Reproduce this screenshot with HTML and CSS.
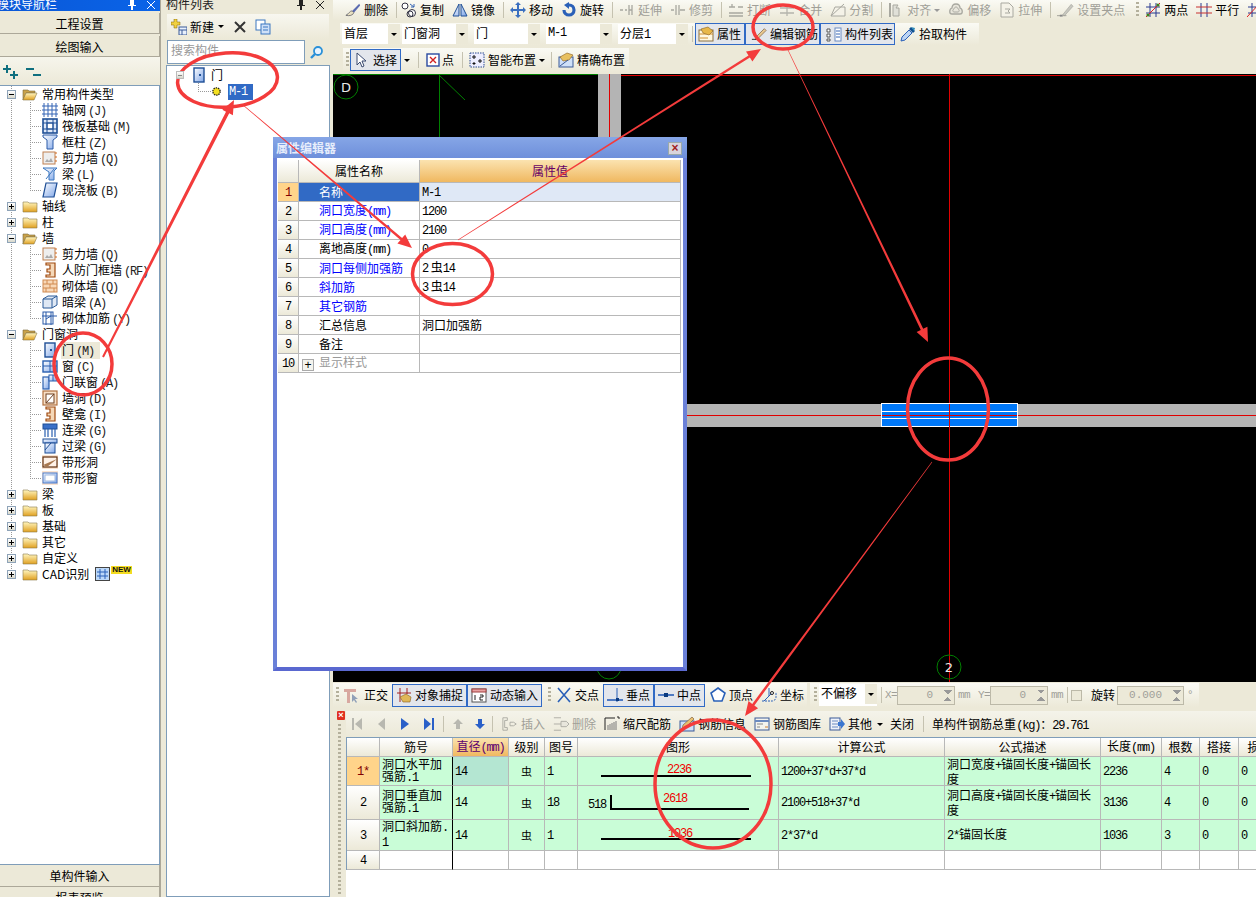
FILE: index.html
```html
<!DOCTYPE html>
<html lang="zh">
<head>
<meta charset="utf-8">
<title>构件编辑</title>
<link rel="stylesheet" href="styles.css">
</head>
<body>
<svg class="sprite" width="0" height="0">
  <defs>
    <linearGradient id="gold" x1="0" y1="0" x2="0" y2="1"><stop offset="0" stop-color="#fff6c0"/><stop offset="1" stop-color="#e0a020"/></linearGradient>
    <linearGradient id="blu" x1="0" y1="0" x2="1" y2="1"><stop offset="0" stop-color="#ffffff"/><stop offset="1" stop-color="#7fa6e8"/></linearGradient>
    <symbol id="f-open" viewBox="0 0 16 16"><path d="M1 14V4h5l1 1h6v2H4L1 14z" fill="#c9a24a" stroke="#7a6a3a" stroke-width=".6"/><path d="M1 14l3-7h11l-3 7z" fill="url(#gold)" stroke="#8a7a4a" stroke-width=".6"/></symbol>
    <symbol id="f-shut" viewBox="0 0 16 16"><path d="M1 4h5l1 1h8v9H1z" fill="url(#gold)" stroke="#8a7a4a" stroke-width=".6"/></symbol>
    <symbol id="grid" viewBox="0 0 16 16"><path d="M2 1v14M6 1v14M10 1v14M14 1v14M0 4h16M0 8h16M0 12h16" stroke="#3565b5" fill="none"/></symbol>
    <symbol id="raft" viewBox="0 0 16 16"><rect x="1" y="1" width="14" height="14" fill="#dfe8f8" stroke="#1f4f96" stroke-width="1.6"/><rect x="5" y="5" width="6" height="6" fill="#fff" stroke="#1f4f96"/><path d="M1 5h14M1 11h14M5 1v14M11 1v14" stroke="#1f4f96"/></symbol>
    <symbol id="col" viewBox="0 0 16 16"><path d="M1 1h14v2l-4 3v9H5V6L1 3z" fill="url(#blu)" stroke="#2a5aa8"/></symbol>
    <symbol id="wall" viewBox="0 0 16 16"><rect x="1" y="2" width="12" height="12" fill="#eee" stroke="#c08050"/><path d="M3 12l2-3 2 2 2-3 2 4z" fill="#aaa"/><path d="M13 3h2M13 7h2M13 11h2" stroke="#d06a20"/></symbol>
    <symbol id="beam" viewBox="0 0 16 16"><path d="M1 2h14l-3 3v9H7V6z" fill="url(#blu)" stroke="#3a76c0"/><path d="M4 13l8-10" stroke="#3a76c0"/></symbol>
    <symbol id="slab" viewBox="0 0 16 16"><path d="M4 1h11l-3 14H1z" fill="url(#blu)" stroke="#1f4f96" stroke-width="1.2"/></symbol>
    <symbol id="rf" viewBox="0 0 16 16"><path d="M4 1h9v14H4v-2h4v-3H5V7h3V3H4z" fill="#f5d8b8" stroke="#a04a10" stroke-width="1.2"/></symbol>
    <symbol id="brick" viewBox="0 0 16 16"><rect x="1" y="2" width="14" height="12" fill="#f8d8b8" stroke="#d08a50"/><path d="M1 6h14M1 10h14M5 2v4M11 2v4M8 6v4M4 10v4M12 10v4" stroke="#d08a50"/></symbol>
    <symbol id="dark" viewBox="0 0 16 16"><path d="M1 5l5-3h9v9l-5 3H1z" fill="#dfe8f4" stroke="#2a5a98"/><path d="M1 5h9v9M10 5l5-3" stroke="#2a5a98" fill="none"/></symbol>
    <symbol id="rebar" viewBox="0 0 16 16"><rect x="1" y="2" width="10" height="12" fill="#fff" stroke="#2a5aa8"/><path d="M0 6h15M4 2v13M9 2v13M4 9l5-3" stroke="#2a5aa8" fill="none"/></symbol>
    <symbol id="door" viewBox="0 0 16 16"><rect x="3" y="1" width="10" height="14" fill="url(#blu)" stroke="#1f4f96" stroke-width="1.4"/><rect x="8" y="7" width="2" height="2" fill="#1f4f96"/></symbol>
    <symbol id="win" viewBox="0 0 16 16"><rect x="1" y="3" width="14" height="11" fill="url(#blu)" stroke="#2a5fb0" stroke-width="1.4"/><path d="M8 3v11M1 8h14" stroke="#2a5fb0"/></symbol>
    <symbol id="dw" viewBox="0 0 16 16"><rect x="1" y="3" width="6" height="12" fill="url(#blu)" stroke="#2a5fb0" stroke-width="1.2"/><rect x="7" y="1" width="8" height="6" fill="url(#blu)" stroke="#2a5fb0"/><path d="M11 1v6" stroke="#2a5fb0"/></symbol>
    <symbol id="hole" viewBox="0 0 16 16"><rect x="1" y="1" width="14" height="14" fill="#f8e0c8" stroke="#b07040" stroke-width="1.2"/><rect x="4" y="4" width="8" height="9" fill="#fff" stroke="#704020"/><path d="M4 13l8-9" stroke="#704020"/></symbol>
    <symbol id="lint" viewBox="0 0 16 16"><rect x="1" y="2" width="14" height="5" fill="#3a70c8" stroke="#1f4f96"/><path d="M3 7v8M6 7v8M10 7v8M13 7v8" stroke="#2a5fb0" stroke-width="1.2"/></symbol>
    <symbol id="over" viewBox="0 0 16 16"><rect x="1" y="1" width="14" height="4" fill="url(#blu)" stroke="#1f4f96"/><rect x="3" y="5" width="10" height="10" fill="url(#blu)" stroke="#1f4f96"/><path d="M3 12l6-7" stroke="#1f4f96"/></symbol>
    <symbol id="strip" viewBox="0 0 16 16"><rect x="0" y="1" width="16" height="14" fill="#fbe3d0"/><rect x="1" y="3" width="14" height="10" fill="#fff2e8" stroke="#603010" stroke-width="1.2"/><path d="M1 11l14-6-10 8z" fill="#a87850"/></symbol>
    <symbol id="stripw" viewBox="0 0 16 16"><rect x="0" y="1" width="16" height="14" fill="#fbe3d0"/><rect x="1" y="3" width="14" height="10" fill="url(#blu)" stroke="#4a7ac8"/><rect x="3" y="5" width="10" height="6" fill="#fff" stroke="#a0b8e0"/></symbol>
    <symbol id="brush" viewBox="0 0 18 16"><path d="M16 1L8 9l2 2 7-8z" fill="#5a6ab0"/><path d="M8 9c-3 0-3 3-7 5 4 1 8 0 9-3z" fill="#e8e0c0" stroke="#404050" stroke-width=".7"/></symbol>
    <symbol id="copy" viewBox="0 0 16 16"><circle cx="4" cy="4" r="3" fill="#fff" stroke="#334"/><circle cx="11" cy="11" r="3.5" fill="#fff" stroke="#334"/><circle cx="9" cy="12" r="3" fill="none" stroke="#334"/><path d="M9 2l4 3m0-3v3h-3" stroke="#3565b5" fill="none"/></symbol>
    <symbol id="mirror" viewBox="0 0 16 16"><path d="M7 2L1 14h6zM9 2l6 12H9z" fill="url(#blu)" stroke="#1f4f96"/></symbol>
    <symbol id="move" viewBox="0 0 16 16"><path d="M8 0l3 3H9v4h4V5l3 3-3 3V9H9v4h2l-3 3-3-3h2V9H3v2L0 8l3-3v2h4V3H5z" fill="#3a6fc0"/></symbol>
    <symbol id="rot" viewBox="0 0 16 16"><path d="M8 3a5 5 0 1 1-5 5" fill="none" stroke="#2a60b8" stroke-width="3.2"/><path d="M8 0v7L3 3z" fill="#2a60b8"/></symbol>
    <symbol id="ext" viewBox="0 0 16 16"><path d="M1 8h3M6 8h2M10 8h3M10 3v10M13 3v10" stroke="#a8a8a0" fill="none" stroke-width="1.3"/></symbol>
    <symbol id="trim" viewBox="0 0 16 16"><path d="M1 8h3M10 8h5M6 3v10M9 3v10" stroke="#a8a8a0" fill="none" stroke-width="1.3"/></symbol>
    <symbol id="brk" viewBox="0 0 16 16"><path d="M1 5h6M10 5h5M1 11h14M4 2v3M1 14h14" stroke="#a8a8a0" fill="none" stroke-width="1.3"/></symbol>
    <symbol id="merge" viewBox="0 0 16 16"><path d="M1 6h14M1 11h14M8 2v12" stroke="#b4b4ac" fill="none" stroke-width="1.3"/></symbol>
    <symbol id="split" viewBox="0 0 16 16"><path d="M1 14l4-9h10v9zM1 14l13-12" fill="#f4f2e8" stroke="#a8a8a0"/></symbol>
    <symbol id="align" viewBox="0 0 16 16"><path d="M2 1v14" stroke="#a8a8a0" stroke-width="2"/><path d="M5 3h5l-2 3h3v8H5z" fill="#e0e0d8" stroke="#a8a8a0"/></symbol>
    <symbol id="offs" viewBox="0 0 16 16"><path d="M8 2c-3 0-4 2-4 4-3 1-3 6 0 6h8c3 0 3-5 0-6 0-2-1-4-4-4z" fill="#e8e6dc" stroke="#a8a8a0" stroke-width="1.3"/><path d="M8 5c-1 0-2 1-2 2-2 1-1 3 0 3h4c1 0 2-2 0-3 0-1-1-2-2-2z" fill="none" stroke="#a8a8a0"/></symbol>
    <symbol id="stre" viewBox="0 0 16 16"><path d="M2 1h8l4 4v10H2z" fill="#f4f2e8" stroke="#a8a8a0"/><path d="M6 7h5l-2 2 2 2H6" fill="none" stroke="#a8a8a0"/></symbol>
    <symbol id="grp" viewBox="0 0 18 16"><path d="M6 13L15 2l2 2-9 10z" fill="#c8c8c0" stroke="#a0a098" stroke-width=".6"/><path d="M0 14h4M6 14h4" stroke="#a0a098"/><rect x="3" y="13" width="3" height="2" fill="#888"/></symbol>
    <symbol id="twopt" viewBox="0 0 16 16"><path d="M1 5h14M1 11h14M5 1v14M11 1v14" stroke="#2a3a90" fill="none"/><path d="M1 15L15 1" stroke="#e02020"/><circle cx="3" cy="13" r="1.6" fill="#408020"/><circle cx="13" cy="3" r="1.6" fill="#408020"/></symbol>
    <symbol id="para" viewBox="0 0 16 16"><path d="M5 1v14M11 1v14" stroke="#2a3a90" fill="none"/><path d="M0 5h16M0 11h16" stroke="#c83030"/></symbol>
    <symbol id="ang" viewBox="0 0 16 16"><path d="M1 5h12M1 11h12M5 1v14M10 1v14" stroke="#2a3a90" fill="none"/><path d="M0 15L13 1" stroke="#e02020"/><circle cx="14.500" cy="12" r="1.500" fill="none" stroke="#e02020"/></symbol>
    <symbol id="prop" viewBox="0 0 16 16"><rect x="1" y="4" width="14" height="11" fill="#fff8e0" stroke="#8a7040"/><path d="M1 8h14M2 12h8" stroke="#d09030"/><path d="M3 3l7-2 5 4-4 4-6-2z" fill="#e8b848" stroke="#8a6020" stroke-width=".6"/></symbol>
    <symbol id="edit" viewBox="0 0 18 16"><path d="M6 11l9-9 2 2-9 9-3 1z" fill="#e8c890" stroke="#705030" stroke-width=".7"/><path d="M1 14h8" stroke="#222"/></symbol>
    <symbol id="lst" viewBox="0 0 16 16"><rect x="9" y="2" width="6" height="13" fill="#fff" stroke="#6a8ac0"/><path d="M10 5h4M10 8h4M10 11h4" stroke="#3565b5"/><path d="M1 3h3v3H1zM1 8h3v3H1zM1 13h3v2H1z" fill="#fff" stroke="#555"/></symbol>
    <symbol id="pick" viewBox="0 0 16 16"><path d="M1 15l1-4 7-7 3 3-7 7z" fill="#bcd4f4" stroke="#2a60b8"/><path d="M9 3l2-2 4 4-2 2z" fill="#0f4f90"/><path d="M11 1l4 1-1 3z" fill="#2e8ab8"/></symbol>
    <symbol id="sel" viewBox="0 0 16 16"><path d="M3 1v12l3-3 2 5 2-1-2-5h4z" fill="#fff" stroke="#3a4a70"/></symbol>
    <symbol id="pnt" viewBox="0 0 16 16"><rect x="2" y="2" width="12" height="12" fill="#fff" stroke="#2a4aa0" stroke-width="1.4"/><path d="M5 5l6 6M11 5l-6 6" stroke="#d02020" stroke-width="1.4"/></symbol>
    <symbol id="smart" viewBox="0 0 16 16"><rect x="1" y="1" width="14" height="14" fill="#eef" stroke="#2a4a90" stroke-dasharray="1.500 1"/><path d="M5 3v4M3 5h4M11 7v4M9 9h4M5 10v3M3.500 11.500h3" stroke="#111"/></symbol>
    <symbol id="exact" viewBox="0 0 16 16"><rect x="1" y="5" width="14" height="10" fill="#cfe0f8" stroke="#3a5a98"/><path d="M2 5l7-4 6 2-4 5-6 1z" fill="#e8c060" stroke="#8a6020" stroke-width=".6"/><path d="M2 14l8-6" stroke="#3a5a98"/></symbol>
    <symbol id="orth" viewBox="0 0 16 16"><path d="M0 2h12v3H6v11H3V5H0z" fill="#d8a8a0"/><path d="M8 7v8l2-2 2 3 1-1-2-3h3z" fill="#90a0b8"/></symbol>
    <symbol id="snap" viewBox="0 0 16 16"><path d="M1 6h14M4 1v14M11 1v6" stroke="#a02020"/><path d="M4 10l6-3 5 3-1 5H7z" fill="#e0b858" stroke="#8a6020" stroke-width=".6"/></symbol>
    <symbol id="dyn" viewBox="0 0 16 16"><rect x="1" y="2" width="14" height="13" fill="#fff" stroke="#555"/><rect x="1" y="2" width="14" height="3" fill="#e8a0a0" stroke="#a04040"/><path d="M4 8v5M9 8h3v2h-3v3h3" stroke="#222" fill="none"/></symbol>
    <symbol id="cross" viewBox="0 0 16 16"><path d="M2 1l12 14M14 1L2 15" stroke="#2a60b8" stroke-width="1.6"/></symbol>
    <symbol id="perp" viewBox="0 0 16 16"><path d="M0 13h16" stroke="#2a60b8" stroke-width="1.600"/><path d="M10 1v14" stroke="#2a60b8"/><rect x="9" y="11" width="3" height="3" fill="#0a3a80"/></symbol>
    <symbol id="mid" viewBox="0 0 16 16"><path d="M0 8h16" stroke="#2a60b8" stroke-width="1.600"/><rect x="6" y="6" width="4" height="4" fill="#0a3a80"/></symbol>
    <symbol id="vert" viewBox="0 0 16 16"><path d="M8 1l7 5-3 8H4L1 6z" fill="#fff" stroke="#2a60b8" stroke-width="1.600"/></symbol>
    <symbol id="coord" viewBox="0 0 16 16"><path d="M1 14h10a4 4 0 0 0 4-4V5" fill="none" stroke="#2a60b8" stroke-dasharray="2 1"/><path d="M3 14l8-8M8 1v8" stroke="#2a60b8"/><circle cx="11" cy="6" r="1.5" fill="#fff" stroke="#222"/></symbol>
    <symbol id="first" viewBox="0 0 10 16"><path d="M0 2h2v12H0z"/><path d="M10 2v12L3 8z"/></symbol>
    <symbol id="prev" viewBox="0 0 10 16"><path d="M9 2v12L2 8z"/></symbol>
    <symbol id="next" viewBox="0 0 10 16"><path d="M1 2v12l8-6z"/></symbol>
    <symbol id="last" viewBox="0 0 10 16"><path d="M0 2v12l7-6z"/><path d="M8 2h2v12H8z"/></symbol>
    <symbol id="up" viewBox="0 0 10 10"><path d="M5 0l5 5H7v5H3V5H0z"/></symbol>
    <symbol id="down" viewBox="0 0 10 10"><path d="M5 10L0 5h3V0h4v5h3z"/></symbol>
    <symbol id="ins" viewBox="0 0 18 16"><path d="M1 1h5v3H3v8h3v3H1zM9 6h4l3 2-3 2H9z" fill="none" stroke="#a8a8a0"/></symbol>
    <symbol id="del2" viewBox="0 0 18 16"><path d="M1 1h8M1 8h8M1 15h8" stroke="#a8a8a0"/><path d="M9 5h6l3 3-3 3H9z" fill="#e8e6dc" stroke="#a8a8a0"/></symbol>
    <symbol id="scale" viewBox="0 0 16 16"><path d="M1 2h10M1 2v12" stroke="#222"/><path d="M4 14V9M6 14V8M8 14V7M10 14V6M12 14V5" stroke="#7a7a7a"/><path d="M13 1h2v2" stroke="#222" fill="none"/></symbol>
    <symbol id="info" viewBox="0 0 16 16"><rect x="1" y="5" width="14" height="10" fill="#cfe0f8" stroke="#3a5a98"/><path d="M4 9l9-8 2 2-9 9-3 1z" fill="#e8c070" stroke="#705030" stroke-width=".6"/></symbol>
    <symbol id="lib" viewBox="0 0 16 16"><rect x="1" y="2" width="14" height="12" fill="#f4f4ee" stroke="#3a5a98"/><path d="M1 5h14" stroke="#6a8ac0" stroke-width="2"/><path d="M3 8h6M3 11h3" stroke="#888"/><path d="M11 11h3" stroke="#d08030"/></symbol>
    <symbol id="oth" viewBox="0 0 16 16"><rect x="1" y="2" width="10" height="12" fill="#eef2fa" stroke="#3a5a98"/><path d="M3 5h6M3 8h6M3 11h6" stroke="#6a8ac0"/><path d="M9 6h3V3l4 5-4 5v-3H9z" fill="#3a76d0"/></symbol>
    <symbol id="pin" viewBox="0 0 8 10"><path d="M2 0h4v5h2v1H5v4H3V6H0V5h2z" fill="currentColor"/></symbol>
    <symbol id="xx" viewBox="0 0 10 10"><path d="M1 1l8 8M9 1L1 9" stroke="currentColor" fill="none"/></symbol>
  </defs>
</svg>

<aside class="nav">
  <div class="dock dock-blue"><span>模块导航栏</span><svg class="pin"><use href="#pin"/></svg><svg class="close"><use href="#xx"/></svg></div>
  <button class="bar">工程设置</button>
  <button class="bar">绘图输入</button>
  <div class="nav-tools">
    <svg class="plus" viewBox="0 0 16 16"><path d="M3 1h2v3h3v2H5v3H3V6H0V4h3zM10 7h2v3h3v2h-3v3h-2v-3H7v-2h3z" fill="#0f6f7f"/></svg>
    <svg class="plus" viewBox="0 0 16 16"><path d="M0 4h8v2H0zM7 10h8v2H7z" fill="#0f6f7f"/></svg>
  </div>
  <div class="tree">
    <div class="row v1"><i class="exp minus"></i><svg class="fold"><use href="#f-open"/></svg><span>常用构件类型</span></div>
    <div class="row v1 v2"><svg class="ico"><use href="#grid"/></svg><span>轴网<b>(J)</b></span></div>
    <div class="row v1 v2"><svg class="ico"><use href="#raft"/></svg><span>筏板基础<b>(M)</b></span></div>
    <div class="row v1 v2"><svg class="ico"><use href="#col"/></svg><span>框柱<b>(Z)</b></span></div>
    <div class="row v1 v2"><svg class="ico"><use href="#wall"/></svg><span>剪力墙<b>(Q)</b></span></div>
    <div class="row v1 v2"><svg class="ico"><use href="#beam"/></svg><span>梁<b>(L)</b></span></div>
    <div class="row v1 v2e"><svg class="ico"><use href="#slab"/></svg><span>现浇板<b>(B)</b></span></div>
    <div class="row v1"><i class="exp"></i><svg class="fold"><use href="#f-shut"/></svg><span>轴线</span></div>
    <div class="row v1"><i class="exp"></i><svg class="fold"><use href="#f-shut"/></svg><span>柱</span></div>
    <div class="row v1"><i class="exp minus"></i><svg class="fold"><use href="#f-open"/></svg><span>墙</span></div>
    <div class="row v1 v2"><svg class="ico"><use href="#wall"/></svg><span>剪力墙<b>(Q)</b></span></div>
    <div class="row v1 v2"><svg class="ico"><use href="#rf"/></svg><span>人防门框墙<b>(RF)</b></span></div>
    <div class="row v1 v2"><svg class="ico"><use href="#brick"/></svg><span>砌体墙<b>(Q)</b></span></div>
    <div class="row v1 v2"><svg class="ico"><use href="#dark"/></svg><span>暗梁<b>(A)</b></span></div>
    <div class="row v1 v2e"><svg class="ico"><use href="#rebar"/></svg><span>砌体加筋<b>(Y)</b></span></div>
    <div class="row v1"><i class="exp minus"></i><svg class="fold"><use href="#f-open"/></svg><span>门窗洞</span></div>
    <div class="row v1 v2"><svg class="ico"><use href="#door"/></svg><span class="hover">门<b>(M)</b></span></div>
    <div class="row v1 v2"><svg class="ico"><use href="#win"/></svg><span>窗<b>(C)</b></span></div>
    <div class="row v1 v2"><svg class="ico"><use href="#dw"/></svg><span>门联窗<b>(A)</b></span></div>
    <div class="row v1 v2"><svg class="ico"><use href="#hole"/></svg><span>墙洞<b>(D)</b></span></div>
    <div class="row v1 v2"><svg class="ico"><use href="#rf"/></svg><span>壁龛<b>(I)</b></span></div>
    <div class="row v1 v2"><svg class="ico"><use href="#lint"/></svg><span>连梁<b>(G)</b></span></div>
    <div class="row v1 v2"><svg class="ico"><use href="#over"/></svg><span>过梁<b>(G)</b></span></div>
    <div class="row v1 v2"><svg class="ico"><use href="#strip"/></svg><span>带形洞</span></div>
    <div class="row v1 v2e"><svg class="ico"><use href="#stripw"/></svg><span>带形窗</span></div>
    <div class="row v1"><i class="exp"></i><svg class="fold"><use href="#f-shut"/></svg><span>梁</span></div>
    <div class="row v1"><i class="exp"></i><svg class="fold"><use href="#f-shut"/></svg><span>板</span></div>
    <div class="row v1"><i class="exp"></i><svg class="fold"><use href="#f-shut"/></svg><span>基础</span></div>
    <div class="row v1"><i class="exp"></i><svg class="fold"><use href="#f-shut"/></svg><span>其它</span></div>
    <div class="row v1"><i class="exp"></i><svg class="fold"><use href="#f-shut"/></svg><span>自定义</span></div>
    <div class="row v1e"><i class="exp"></i><svg class="fold"><use href="#f-shut"/></svg><span>CAD识别</span>
      <svg class="cad" viewBox="0 0 15 14"><rect x=".5" y=".5" width="14" height="13" fill="#bcd8f8" stroke="#444"/><path d="M5 2v10M10 2v10M2 5h11M2 9h11" stroke="#2a60b8"/></svg><em class="new">NEW</em></div>
  </div>
  <button class="bar bar-flat">单构件输入</button>
  <button class="bar bar-flat">报表预览</button>
</aside>

<div class="splitter"></div>

<aside class="list">
  <div class="dock"><span>构件列表</span><svg class="pin"><use href="#pin"/></svg><svg class="close"><use href="#xx"/></svg></div>
  <div class="list-tools">
    <svg class="ico new-ico" viewBox="0 0 16 16"><path d="M3 0h3v3h3v3H6v3H3V6H0V3h3z" fill="#f0d040" stroke="#806000" stroke-width=".5"/><rect x="8" y="8" width="8" height="8" fill="#e8f0fc" stroke="#3a5a98"/><path d="M8 11h8M11 11v5" stroke="#3a5a98"/></svg>
    <span class="txt">新建</span><i class="caret"></i>
    <svg class="del-x" viewBox="0 0 12 12"><path d="M1 1l10 10M11 1L1 11" stroke="#333" stroke-width="2"/></svg>
    <svg class="ico" viewBox="0 0 16 16"><rect x="1" y="1" width="9" height="10" fill="#fff" stroke="#3a76c0"/><rect x="6" y="5" width="9" height="10" fill="#cfe0f8" stroke="#3a76c0"/><path d="M8 8h5M8 11h5" stroke="#3a76c0"/></svg>
  </div>
  <div class="search">
    <div class="search-box">搜索构件</div>
    <div class="search-btn"><svg viewBox="0 0 14 14" width="14" height="14"><circle cx="8" cy="6" r="4" fill="#e8f4ff" stroke="#2a90d8" stroke-width="1.800"/><path d="M5 9l-4 4" stroke="#2a90d8" stroke-width="2.400"/></svg></div>
  </div>
  <div class="list-tree">
    <div class="lrow"><i class="exp minus pale"></i><svg class="ico door-ico"><use href="#door"/></svg><span>门</span></div>
    <div class="lrow lrow-child"><svg class="sun" viewBox="0 0 12 12"><circle cx="6" cy="6" r="4" fill="#f4e020" stroke="#222" stroke-dasharray="1.500 1" stroke-width="1.500"/></svg><span class="picked">M-1</span></div>
  </div>
</aside>

<main class="main">
  <div class="tb row1">
    <div class="t"><svg class="ti"><use href="#brush"/></svg><span>删除</span></div>
    <i class="sep"></i>
    <div class="t"><svg class="ti"><use href="#copy"/></svg><span>复制</span></div>
    <div class="t"><svg class="ti"><use href="#mirror"/></svg><span>镜像</span></div>
    <i class="sep sep-w"></i>
    <div class="t"><svg class="ti"><use href="#move"/></svg><span>移动</span></div>
    <div class="t"><svg class="ti"><use href="#rot"/></svg><span>旋转</span></div>
    <i class="sep sep-w"></i>
    <div class="t off"><svg class="ti"><use href="#ext"/></svg><span>延伸</span></div>
    <div class="t off"><svg class="ti"><use href="#trim"/></svg><span>修剪</span></div>
    <i class="sep sep-w"></i>
    <div class="t off"><svg class="ti"><use href="#brk"/></svg><span>打断</span></div>
    <div class="t off"><svg class="ti"><use href="#merge"/></svg><span>合并</span></div>
    <div class="t off"><svg class="ti"><use href="#split"/></svg><span>分割</span></div>
    <i class="sep sep-w"></i>
    <div class="t off t-caret"><svg class="ti"><use href="#align"/></svg><span>对齐</span><i class="caret gray"></i></div>
    <div class="t off"><svg class="ti"><use href="#offs"/></svg><span>偏移</span></div>
    <div class="t off"><svg class="ti"><use href="#stre"/></svg><span>拉伸</span></div>
    <i class="sep sep-w"></i>
    <div class="t off"><svg class="ti ti18"><use href="#grp"/></svg><span>设置夹点</span></div>
    <i class="grip grip-gap"></i>
    <div class="t"><svg class="ti"><use href="#twopt"/></svg><span>两点</span></div>
    <div class="t"><svg class="ti"><use href="#para"/></svg><span>平行</span></div>
    <div class="t"><svg class="ti"><use href="#ang"/></svg><span>点角</span></div>
  </div>

  <div class="tb row2">
    <div class="combo c1"><span>首层</span><i class="drop"></i></div>
    <div class="combo"><span>门窗洞</span><i class="drop"></i></div>
    <div class="combo"><span>门</span><i class="drop"></i></div>
    <div class="combo"><span class="n">M-1</span><i class="drop"></i></div>
    <div class="combo c5"><span>分层<b>1</b></span><i class="drop"></i></div>
    <i class="sep sep-r2"></i>
    <div class="toggles">
      <div class="tog w50"><svg class="ti"><use href="#prop"/></svg><span>属性</span></div>
      <div class="tog w75"><svg class="ti"><use href="#edit"/></svg><span>编辑钢筋</span></div>
      <div class="tog w75"><svg class="ti"><use href="#lst"/></svg><span>构件列表</span></div>
    </div>
    <div class="t t-pick"><svg class="ti"><use href="#pick"/></svg><span>拾取构件</span></div>
  </div>

  <div class="tb row3">
    <i class="grip"></i>
    <div class="toggles"><div class="tog w51"><svg class="ti"><use href="#sel"/></svg><span>选择</span></div></div>
    <i class="caret"></i>
    <i class="sep"></i>
    <div class="t t-pt"><svg class="ti"><use href="#pnt"/></svg><span>点</span></div>
    <i class="sep"></i>
    <div class="t t-smart"><svg class="ti"><use href="#smart"/></svg><span>智能布置</span><i class="caret"></i></div>
    <i class="sep"></i>
    <div class="t"><svg class="ti"><use href="#exact"/></svg><span>精确布置</span></div>
  </div>

  <div class="canvas">
    <svg class="draw" viewBox="0 0 923 608" width="923" height="608">
      <rect x="265" y="0" width="23" height="400" fill="#b4b4b4"/>
      <rect x="354" y="330" width="569" height="23" fill="#b4b4b4"/>
      <path d="M0 .5h265" stroke="#008000"/>
      <path d="M288 1.500h635M276.500 0V400M616.500 0V608M354 341.500h569" stroke="#e00000"/>
      <path d="M106.500 0V80M106 1l26 25" stroke="#008000" fill="none"/>
      <circle cx="13" cy="13" r="12" fill="none" stroke="#008000"/>
      <text x="13" y="18" class="axis">D</text>
      <circle cx="616" cy="593" r="12" fill="none" stroke="#008000"/>
      <text x="616" y="598" class="axis">2</text>
      <circle cx="276" cy="593" r="12" fill="none" stroke="#008000"/>
      <rect x="548.500" y="329.500" width="136" height="23" fill="#0078f8" stroke="#fff"/>
      <path d="M548 337.500h137M548 344.500h137" stroke="#fff"/>
      <path d="M549 341.500h135M616.500 330v23" stroke="#e00000"/>
    </svg>
  </div>

  <div class="tb snapbar">
    <div class="snap-a">
      <i class="grip"></i>
      <div class="t t-o"><svg class="ti"><use href="#orth"/></svg><span>正交</span></div>
      <div class="toggles">
        <div class="tog w75"><svg class="ti"><use href="#snap"/></svg><span>对象捕捉</span></div>
        <div class="tog w75"><svg class="ti"><use href="#dyn"/></svg><span>动态输入</span></div>
      </div>
      <i class="grip"></i>
      <div class="t"><svg class="ti"><use href="#cross"/></svg><span>交点</span></div>
      <div class="toggles toggles-pts">
        <div class="tog w51"><svg class="ti"><use href="#perp"/></svg><span>垂点</span></div>
        <div class="tog w51"><svg class="ti"><use href="#mid"/></svg><span>中点</span></div>
      </div>
      <div class="t t-vert"><svg class="ti"><use href="#vert"/></svg><span>顶点</span></div>
      <div class="t"><svg class="ti"><use href="#coord"/></svg><span>坐标</span></div>
    </div>
    <div class="snap-b">
      <i class="grip"></i>
      <div class="combo c-off"><span>不偏移</span><i class="drop clear"></i></div>
      <i class="sep"></i>
      <span class="lab">X=</span><div class="spin"><span>0</span><i class="arrows"></i></div><span class="lab">mm</span>
      <span class="lab lab-y">Y=</span><div class="spin"><span>0</span><i class="arrows"></i></div><span class="lab">mm</span>
      <i class="sep"></i>
      <i class="check"></i>
      <span class="rot">旋转</span>
      <div class="spin spin-r"><span>0.000</span><i class="arrows"></i></div><span class="lab">°</span>
    </div>
  </div>

  <div class="panel">
    <div class="gutter"><i class="close-red">×</i><i class="grip long"></i></div>
    <div class="sheet">
      <div class="tb gridbar">
        <svg class="nv off-fill"><use href="#first"/></svg>
        <svg class="nv off-fill"><use href="#prev"/></svg>
        <svg class="nv on-fill"><use href="#next"/></svg>
        <svg class="nv on-fill"><use href="#last"/></svg>
        <i class="sep"></i>
        <svg class="ar off-fill"><use href="#up"/></svg>
        <svg class="ar on-fill"><use href="#down"/></svg>
        <i class="sep"></i>
        <div class="t off"><svg class="ti"><use href="#ins"/></svg><span>插入</span></div>
        <div class="t off"><svg class="ti"><use href="#del2"/></svg><span>删除</span></div>
        <div class="t"><svg class="ti"><use href="#scale"/></svg><span>缩尺配筋</span></div>
        <div class="t"><svg class="ti"><use href="#info"/></svg><span>钢筋信息</span></div>
        <div class="t"><svg class="ti"><use href="#lib"/></svg><span>钢筋图库</span></div>
        <div class="t"><svg class="ti"><use href="#oth"/></svg><span>其他</span><i class="caret"></i></div>
        <div class="t t-close"><span>关闭</span></div>
        <i class="sep sep-tot"></i>
        <div class="t"><span>单构件钢筋总重<b>(kg)</b>：<b>29.761</b></span></div>
      </div>
      <table class="rebar">
        <colgroup><col class="w33"><col class="w73"><col class="w56"><col class="w36"><col class="w33b"><col class="w201"><col class="w166"><col class="w156"><col class="w61"><col class="w38"><col class="w39"><col class="w42"></colgroup>
        <tr class="h19"><th></th><th>筋号</th><th class="act">直径<b>(mm)</b></th><th>级别</th><th>图号</th><th>图形</th><th>计算公式</th><th>公式描述</th><th>长度<b>(mm)</b></th><th>根数</th><th>搭接</th><th>损耗</th></tr>
        <tr class="h29 g">
          <th class="cur"><b>1*</b></th><td class="dk">洞口水平加<br>强筋<b>.1</b></td><td class="sel"><b>14</b></td><td class="ctr">虫</td><td><b>1</b></td>
          <td class="fig"><svg width="200" height="28" viewBox="0 0 200 28"><path d="M23 19h150" stroke="#000" stroke-width="2"/><text x="89" y="16" class="red">2236</text></svg></td>
          <td><b>1200+37*d+37*d</b></td><td>洞口宽度<b>+</b>锚固长度<b>+</b>锚固长<br>度</td><td><b>2236</b></td><td><b>4</b></td><td><b>0</b></td><td><b>0</b></td></tr>
        <tr class="h34 g">
          <th><b>2</b></th><td class="dk">洞口垂直加<br>强筋<b>.1</b></td><td class="dk0"><b>14</b></td><td class="ctr">虫</td><td><b>18</b></td>
          <td class="fig"><svg width="200" height="33" viewBox="0 0 200 33"><path d="M33 9v14h138" stroke="#000" stroke-width="2" fill="none"/><text x="10" y="22" class="blk">518</text><text x="85" y="16" class="red">2618</text></svg></td>
          <td><b>2100+518+37*d</b></td><td>洞口高度<b>+</b>锚固长度<b>+</b>锚固长<br>度</td><td><b>3136</b></td><td><b>4</b></td><td><b>0</b></td><td><b>0</b></td></tr>
        <tr class="h29 g">
          <th><b>3</b></th><td class="dk">洞口斜加筋<b>.</b><br><b>1</b></td><td class="dk0"><b>14</b></td><td class="ctr">虫</td><td><b>1</b></td>
          <td class="fig"><svg width="200" height="28" viewBox="0 0 200 28"><path d="M23 18h150" stroke="#000" stroke-width="2"/><text x="90" y="16" class="red">1036</text></svg></td>
          <td><b>2*37*d</b></td><td><b>2*</b>锚固长度</td><td><b>1036</b></td><td><b>3</b></td><td><b>0</b></td><td><b>0</b></td></tr>
        <tr class="h19"><th><b>4</b></th><td class="dk"></td><td></td><td></td><td></td><td></td><td></td><td></td><td></td><td></td><td></td><td></td></tr>
      </table>
    </div>
  </div>
</main>

<section class="dialog">
  <header class="dlg-title"><span>属性编辑器</span><i class="dlg-x">×</i></header>
  <table class="props">
    <colgroup><col class="p21"><col class="p121"><col class="p261"></colgroup>
    <tr class="ph"><th></th><th>属性名称</th><th class="act purple">属性值</th></tr>
    <tr><th class="cur dark"><b>1</b></th><td class="name on">名称</td><td class="val on2"><b>M-1</b></td></tr>
    <tr><th><b>2</b></th><td class="name bl">洞口宽度<b>(mm)</b></td><td class="val"><b>1200</b></td></tr>
    <tr><th><b>3</b></th><td class="name bl">洞口高度<b>(mm)</b></td><td class="val"><b>2100</b></td></tr>
    <tr><th><b>4</b></th><td class="name">离地高度<b>(mm)</b></td><td class="val"><b>0</b></td></tr>
    <tr><th><b>5</b></th><td class="name bl">洞口每侧加强筋</td><td class="val"><b>2</b> 虫<b>14</b></td></tr>
    <tr><th><b>6</b></th><td class="name bl">斜加筋</td><td class="val"><b>3</b> 虫<b>14</b></td></tr>
    <tr><th><b>7</b></th><td class="name bl">其它钢筋</td><td class="val"></td></tr>
    <tr><th><b>8</b></th><td class="name">汇总信息</td><td class="val">洞口加强筋</td></tr>
    <tr><th><b>9</b></th><td class="name">备注</td><td class="val"></td></tr>
    <tr><th><b>10</b></th><td class="name gr"><i class="pbox">+</i>显示样式</td><td class="val"></td></tr>
  </table>
</section>

<svg class="marks" viewBox="0 0 1256 897" width="1256" height="897">
  <g class="rings">
    <ellipse cx="227.500" cy="80" rx="50" ry="27" transform="rotate(-4 227 80)"/>
    <ellipse cx="83" cy="364" rx="29" ry="31"/>
    <ellipse cx="452.500" cy="274" rx="40" ry="30.500"/>
    <ellipse cx="783" cy="27" rx="30" ry="22"/>
    <ellipse cx="948" cy="409" rx="40.500" ry="51"/>
    <ellipse cx="713" cy="784" rx="58" ry="64"/>
  </g>
  <g class="arrows-red">
    <polygon points="102.100,356.500 226,111.700 222.300,109.800 234,100 232.900,115.200 229.200,113.300 103.900,357.500"/>
    <polygon points="243.200,104.800 402.100,238 405.200,234.400 412,248 397.400,243.600 400.500,240 242.800,105.200"/>
    <polygon points="457.800,239.700 748.500,55.400 746,51.400 761,49 752.400,61.600 749.900,57.600 458.200,240.300"/>
    <polygon points="787.300,47.900 923.200,328.800 927.400,326.800 928,342 916.600,332 920.800,330 786.700,48.100"/>
    <polygon points="931.800,461.800 752.250,703.900 748.500,701.100 745,716 758.100,708.300 754.350,705.500 932.200,462.200"/>
  </g>
</svg>
</body>
</html>
```

FILE: styles.css
```css
* { box-sizing: border-box; }
html, body { margin: 0; height: 100%; }
body {
  width: 1256px; height: 897px; overflow: hidden; position: relative;
  display: flex;
  background: #ece9d8; color: #000;
  font: 12px/16px "Noto Sans CJK SC", sans-serif;
}
i, em { font-style: normal; display: block; }
b { font: 12px "Liberation Mono", monospace; letter-spacing: -1.2px; }
.sprite { position: absolute; }

/* left navigator */
.nav { width: 160px; flex: none; display: flex; flex-direction: column; }
.dock { height: 12px; flex: none; display: flex; align-items: flex-start; overflow: hidden; position: relative; padding-right: 4px; }
.dock > span { line-height: 10px; height: 10px; font-size: 12px; margin-top: -1px; flex: 1; }
.dock-blue { background: linear-gradient(90deg, #0a58d8, #0a64e8); color: #fff; height: 11px; }
.dock-blue > span { margin-left: -3px; }
.pin { width: 8px; height: 10px; margin-right: 10px; color: inherit; }
.close { width: 10px; height: 10px; color: inherit; }
.bar {
  display: block; width: 160px; flex: none; padding: 1px 0 0; border: 0;
  font: inherit; color: #000;
  background: #ece9d8; border-bottom: 1px solid #aca899; border-right: 1px solid #aca899;
  height: 21px; margin-top: 2px;
}
.nav-tools { height: 28px; flex: none; display: flex; gap: 7px; padding: 7px 0 0 3px; background: linear-gradient(#f6f5ec, #ece9d8); }
.plus { width: 16px; height: 16px; }
.tree { flex: 1; background: #fff; border: solid #7f9db9; border-width: 1px 1px 1px 0; overflow: hidden; }
.bar-flat { background: #ece9d8; height: 22px; margin-top: 0; }
.bar-flat:last-child { height: 10px; overflow: hidden; line-height: 16px; padding-top: 3px; border-bottom: 0; }

.row { height: 16px; display: flex; align-items: center; padding-left: 42px; white-space: nowrap; position: relative; }
.row > .exp { position: absolute; left: 7px; top: 4px; }
.row > .fold { margin-left: -20px; }
.row > span { margin-left: 3px; padding: 0 2px 0 1px; }
.fold { width: 16px; height: 16px; flex: none; }
.ico { width: 16px; height: 16px; flex: none; }
.exp { width: 9px; height: 9px; border: 1px solid #8ea3b8; background: linear-gradient(#fff, #d8d8cc); position: relative; z-index: 1; }
.exp::before { content: ""; position: absolute; left: 1px; right: 1px; top: 3px; height: 1px; background: #000; }
.exp:not(.minus)::after { content: ""; position: absolute; top: 1px; bottom: 1px; left: 3px; width: 1px; background: #000; }
.pale { border-color: #bbb; }
.pale::before { background: #888; }
.hover { background: #ece9d8; padding-right: 6px !important; }
.row > span b { margin-left: 2px; color: #222; }

:root {
  --dv: repeating-linear-gradient(#999 0 1px, transparent 1px 2px);
  --dh: repeating-linear-gradient(90deg, #999 0 1px, transparent 1px 2px);
}
.v1 { background: var(--dv) 11px 0 / 1px 100% no-repeat; }
.v1e { background: var(--dv) 11px 0 / 1px 8px no-repeat; }
.v2 {
  background:
    var(--dv) 11px 0 / 1px 100% no-repeat,
    var(--dv) 30px 0 / 1px 100% no-repeat,
    var(--dh) 30px 8px / 12px 1px no-repeat;
}
.v2e {
  background:
    var(--dv) 11px 0 / 1px 100% no-repeat,
    var(--dv) 30px 0 / 1px 8px no-repeat,
    var(--dh) 30px 8px / 12px 1px no-repeat;
}
.cad { width: 15px; height: 14px; margin-left: 4px; flex: none; }
.new { font: bold 8px/8px "Liberation Sans", sans-serif; background: #f4dc20; color: #111; padding: 0 1px; margin: -8px 0 0 1px; }

.splitter { width: 6px; flex: none; background: #ece9d8; border-left: 1px solid #aca899; }

/* component list */
.list { width: 164px; flex: none; display: flex; flex-direction: column; }
.list .dock { background: #ece9d8; color: #222; padding-right: 5px; }
.list .dock > span { margin-left: 0; }
.list-tools { height: 25px; margin: 2px 1px 0; flex: none; display: flex; align-items: center; padding-left: 4px; background: linear-gradient(#f8f7f0, #ece9d8); }
.txt { margin-left: 3px; }
.caret { width: 0; height: 0; border: 3px solid transparent; border-top-color: #000; border-bottom: 0; flex: none; }
.list-tools .caret { margin: 0 10px 0 4px; }
.del-x { width: 12px; height: 12px; margin-right: 9px; }
.search { height: 25px; margin-top: 1px; flex: none; display: flex; padding-left: 1px; }
.search-box { width: 138px; height: 24px; background: #fff; border: 1px solid #7f9db9; color: #999; line-height: 18px; padding-left: 3px; overflow: hidden; }
.search-btn { margin-left: 5px; width: 14px; padding-top: 5px; }
.list-tree { flex: 1; background: #fff; border: solid #7f9db9; border-width: 1px; padding-top: 1px; width: 164px; }
.lrow { height: 16px; display: flex; align-items: center; padding-left: 9px; position: relative; }
.lrow .exp { width: 8px; height: 8px; }
.door-ico { margin: 0 4px 0 7px; }
.lrow-child { padding-left: 44px; height: 17px; background: var(--dv) 31px 0 / 1px 9px no-repeat, var(--dh) 31px 8px / 13px 1px no-repeat; }
.sun { width: 11px; height: 11px; margin-right: 6px; }
.picked { background: #316ac5; color: #fff; width: 25px; height: 16px; padding-left: 1px; font: 12px/16px "Liberation Mono", monospace; letter-spacing: -1.2px; }

/* main area */
.main { flex: none; width: 923px; margin-left: 3px; display: flex; flex-direction: column; overflow: hidden; }
.tb { display: flex; align-items: center; gap: 8px; white-space: nowrap; background: linear-gradient(#fafaf4, #ece9d8); }
.t { display: flex; align-items: center; gap: 3px; flex: none; }
.t.off { color: #a09f98; }
.t-caret { gap: 3px; }
.ti { width: 16px; height: 16px; flex: none; }
.ti18 { width: 17px; }
.sep { width: 1px; height: 16px; background: #c5c2b0; flex: none; margin-right: -4px; }
.sep-w { margin-right: -2px; }
.grip { width: 3px; height: 16px; flex: none; background: repeating-linear-gradient(#b4b09c 0 2px, transparent 2px 4px); }
.grip-gap { margin: 0 -2px 0 3px; }
.gray { border-top-color: #999; }

.row1 { height: 20px; padding-left: 12px; }
.row2 { height: 22px; width: 639px; margin: 3px 0 0 7px; padding-left: 2px; gap: 6px; }
.combo { width: 66px; height: 20px; background: #fff; display: flex; justify-content: space-between; flex: none; line-height: 18px; padding-left: 2px; }
.combo .n { font: 12px/18px "Liberation Mono", monospace; letter-spacing: -1.2px; }
.c1 { width: 58px; margin-right: -4px; }
.c5 { width: 70px; }
.drop { width: 12px; height: 20px; background: #ece9d8; position: relative; flex: none; }
.drop.clear { background: #ece9d8; }
.drop::after { content: ""; position: absolute; left: 3px; top: 9px; border: 3px solid transparent; border-top-color: #000; border-bottom: 0; }
.sep-r2 { margin: 0 -4px 0 -2px; }
.toggles { display: flex; flex: none; }
.tog { height: 22px; border: 1px solid #316ac5; background: #e3e6ec; display: flex; align-items: center; gap: 3px; padding-left: 3px; flex: none; }
.w50 { width: 50px; }
.w51 { width: 51px; }
.w75 { width: 75px; }
.row2 .w50 { padding-left: 2px; }
.row2 .w75 { padding-left: 5px; }
.t-pick { margin-left: -1px; }

.row3 { height: 24px; width: 286px; margin: 3px 0 0 10px; padding-left: 3px; gap: 8px; }
.row3 .grip { margin-right: -7px; }
.row3 .toggles + .caret { margin-left: -5px; }
.row3 .sep { margin-right: -2px; }
.t-pt { gap: 1px; }
.t-smart .caret { margin-right: -2px; }

.canvas { height: 608px; margin-top: 2px; background: #000; flex: none; position: relative; overflow: hidden; }
.draw { display: block; }
.axis { font: 13px "DejaVu Sans", sans-serif; fill: #e8e8e8; text-anchor: middle; }

.snapbar { height: 24px; margin-top: 1px; gap: 0; background: none; align-items: stretch; }
.snap-a { width: 474px; display: flex; align-items: center; gap: 6px; padding-left: 3px; background: linear-gradient(#fafaf4, #ece9d8); flex: none; }
.t-o { gap: 4px; margin-right: -2px; }
.snap-a > .grip { margin-right: -1px; }
.snap-a .tog { height: 23px; }
.toggles-pts { margin-left: -2px; }
.t-vert { margin-left: -1px; margin-right: 2px; }
.snap-b { width: 389px; margin-left: 3px; display: flex; align-items: center; padding-left: 4px; background: linear-gradient(#fafaf4, #ece9d8); flex: none; gap: 3px; }
.c-off { width: 58px; height: 22px; line-height: 18px; margin-left: -1px; }
.snap-b .sep { margin: 0 0 0 1px; }
.lab { font: 11px/16px "Liberation Mono", monospace; color: #a09f98; letter-spacing: -.6px; flex: none; }
.lab-y { margin-left: 5px; }
.spin { width: 58px; height: 19px; border: 1px solid #bcb9a8; background: #ece9d8; color: #a09f98; display: flex; justify-content: flex-end; align-items: center; font: 11px "Liberation Mono", monospace; flex: none; margin-left: -3px; }
.spin span { margin-right: 10px; }
.spin-r { width: 67px; margin-left: -3px; }
.arrows { width: 10px; height: 13px; flex: none; margin-right: 1px; background:
  linear-gradient(45deg, transparent 50%, #999 50%) 1px 1px / 4px 4px no-repeat,
  linear-gradient(-45deg, transparent 50%, #999 50%) 5px 1px / 4px 4px no-repeat,
  linear-gradient(135deg, transparent 50%, #999 50%) 1px 8px / 4px 4px no-repeat,
  linear-gradient(-135deg, transparent 50%, #999 50%) 5px 8px / 4px 4px no-repeat; }
.check { width: 11px; height: 11px; border: 1px solid #bcb9a8; background: #ece9d8; margin: 0 6px 0 0; flex: none; }
.rot { margin-right: 2px; }

.panel { flex: 1; display: flex; min-height: 0; margin-top: 4px; position: relative; }
.gutter { width: 13px; flex: none; position: relative; }
.close-red { width: 8px; height: 9px; background: #e03020; color: #fff; font: bold 9px/9px "Liberation Sans", sans-serif; text-align: center; margin: 0 0 4px 4px; border-radius: 1px; }
.long { height: 170px; margin-left: 5px; }
.sheet { flex: 1; min-width: 0; overflow: hidden; background: #fff; }
.gridbar { height: 26px; padding-left: 6px; gap: 0; background: linear-gradient(#f4f3ea, #ece9d8); }
.nv { width: 10px; height: 16px; flex: none; margin-right: 14px; }
.ar { width: 10px; height: 10px; flex: none; margin-right: 12px; }
.off-fill { fill: #b8b8b0; }
.on-fill { fill: #2a60c8; }
.gridbar .sep { margin: 0 9px 0 -5px; }
.gridbar .t { margin-right: 8px; }
.gridbar .t .caret { margin-left: 2px; }
.gridbar .t-close { margin-left: -1px; }
.gridbar .sep-tot { margin-right: 8px; margin-left: 1px; }
.rebar { border-collapse: separate; border-spacing: 0; table-layout: fixed; width: 934px; border-top: 1px solid #7f9db9; border-left: 1px solid #7f9db9; background: #fff; }
.w33 { width: 33px; } .w33b { width: 33px; } .w73 { width: 73px; } .w56 { width: 56px; } .w36 { width: 36px; }
.w201 { width: 201px; } .w166 { width: 166px; } .w156 { width: 156px; } .w61 { width: 61px; } .w38 { width: 38px; } .w39 { width: 39px; } .w42 { width: 42px; }
.h19 { height: 19px; } .h29 { height: 29px; } .h34 { height: 34px; }
th, td { border-right: 1px solid #b8b8b8; border-bottom: 1px solid #b8b8b8; padding: 0 2px; font-weight: 400; line-height: 12px; text-align: left; overflow: hidden; white-space: nowrap; }
th { text-align: center; background: linear-gradient(#fff, #ece9d8); }
.act { background: linear-gradient(#fbe3b0, #f0b860); color: #5a0070; }
.act b { color: #5a0070; }
.cur { background: #ffd48a; color: #800000; }
.rebar .g td { background: #c9fdd7; }
.rebar .g td.sel { background: #b4e6d2; }
.rebar td.dk, .rebar td:nth-child(2) { border-right: 1px solid #000; }
.rebar td.ctr { text-align: center; font-size: 11px; }
.rebar td.fig { padding: 0; }
.fig svg { display: block; }
.red { font: 12px "Liberation Mono", monospace; letter-spacing: -1.2px; fill: #f00000; }
.blk { font: 12px "Liberation Mono", monospace; letter-spacing: -1.2px; fill: #000; }

/* property dialog */
.dialog { position: absolute; left: 273px; top: 137px; width: 414px; height: 534px; background: #fff; border: 4px solid #6a80d8; border-top: 0; border-bottom-color: #5a68d0; }
.dlg-title { height: 21px; margin: 0 -4px; background: linear-gradient(#86a6e6, #6e8fdb); color: #e6edfb; display: flex; justify-content: space-between; padding: 2px 5px 0 3px; line-height: 17px; font-weight: 700; }
.dlg-x { width: 14px; height: 13px; margin-top: 3px; background: #d8d4dc; border: 1px solid #9aa; color: #a02020; font: bold 12px/11px "Liberation Sans", sans-serif; text-align: center; }
.props { border-collapse: separate; border-spacing: 0; table-layout: fixed; width: 403px; margin: 2px 0 0 1px; }
.p21 { width: 21px; } .p121 { width: 121px; } .p261 { width: 261px; }
.props tr { height: 19px; }
.props .ph { height: 23px; }
.props td.val { font-size: 12px; }
.name { padding-left: 20px; }
.bl { color: #0000ff; }
.bl b { color: #0000ff; }
.gr { color: #999; padding-left: 3px; }
.pbox { display: inline-block; width: 12px; height: 12px; border: 1px solid #aaa; background: #f4f4ee; color: #000; font: 12px/10px "Liberation Sans", sans-serif; text-align: center; margin-right: 5px; vertical-align: -2px; }
.on { background: #316ac5; color: #fff; }
.on2 { background: #dfe8f6; }
.dark b { color: #800000; }
.purple { color: #660066; }

/* hand-drawn annotations */
.marks { position: absolute; left: 0; top: 0; pointer-events: none; }
.rings ellipse { fill: none; stroke: #f33b3b; stroke-width: 3.5; }
.arrows-red polygon { fill: #f33b3b; }
```
